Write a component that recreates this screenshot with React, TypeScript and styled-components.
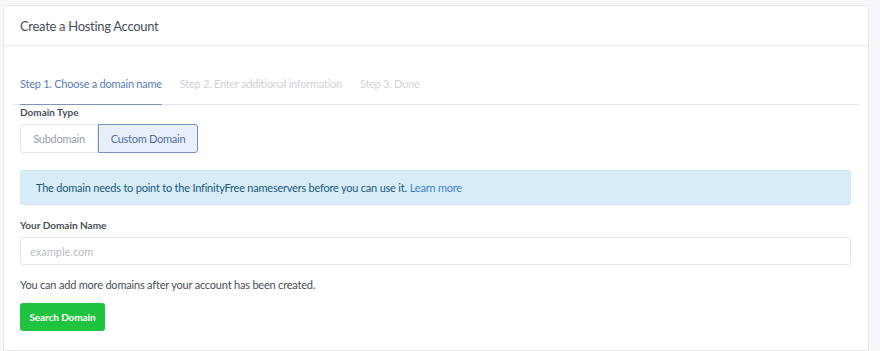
import styled, { createGlobalStyle } from "styled-components";

const GlobalStyle = createGlobalStyle`
  body {
    margin: 0;
    background-color: #f5f7fb;
    font-family: "Lato", "Liberation Sans", sans-serif;
  }
`;

const Page = styled.div`
  padding: 5px 11px 1px 3px;
`;

const Card = styled.div`
  background-color: #fff;
  border: 1px solid #e4e7ec;
  border-radius: 2px;
`;

const CardHeader = styled.div`
  height: 39px;
  display: flex;
  align-items: center;
  padding: 0 16px;
  border-bottom: 1px solid #e9ecef;
  font-size: 13px;
  letter-spacing: -0.3px;
  color: #495057;
`;

const CardBody = styled.div`
  padding: 18px 8px 19px 8px;
`;

const TabList = styled.div`
  display: flex;
  gap: 18px;
  padding-left: 8px;
  border-bottom: 1px solid #e3e6ea;
`;

const Tab = styled.div<{ $active?: boolean }>`
  font-size: 11px;
  letter-spacing: -0.25px;
  line-height: 16px;
  padding: 12px 0;
  margin-bottom: -1px;
  color: ${(p) => (p.$active ? "#5b7db5" : "#d0d3d9")};
  border-bottom: 1px solid ${(p) => (p.$active ? "#7d93bd" : "transparent")};
`;

const Content = styled.div`
  padding: 0 9px 0 8px;
  display: flex;
  flex-direction: column;
  align-items: flex-start;
`;

const Label = styled.div<{ $top: number }>`
  font-size: 10px;
  font-weight: 700;
  color: #495057;
  line-height: 14px;
  margin-top: ${(p) => p.$top}px;
`;

const ButtonGroup = styled.div`
  display: flex;
  margin-top: 5px;
`;

const ToggleButton = styled.div<{ $active?: boolean; $width: number }>`
  width: ${(p) => p.$width}px;
  height: 29px;
  box-sizing: border-box;
  display: flex;
  align-items: center;
  justify-content: center;
  font-size: 11px;
  letter-spacing: -0.25px;
  color: ${(p) => (p.$active ? "#4f6fa6" : "#9aa0ac")};
  background-color: ${(p) => (p.$active ? "#e9effa" : "#fff")};
  border: 1px solid ${(p) => (p.$active ? "#7790c2" : "#e6e8ec")};
  border-radius: ${(p) => (p.$active ? "0 3px 3px 0" : "3px 0 0 3px")};
`;

const Alert = styled.div`
  align-self: stretch;
  margin-top: 17px;
  height: 35px;
  box-sizing: border-box;
  display: flex;
  align-items: center;
  padding: 0 15px;
  background-color: #d6edf9;
  border: 1px solid #cfe7f5;
  border-radius: 3px;
  font-size: 11px;
  letter-spacing: -0.22px;
  color: #24587e;
`;

const Link = styled.a`
  color: #467fcf;
  text-decoration: none;
  margin-left: 3px;
`;

const Input = styled.input`
  align-self: stretch;
  margin-top: 5px;
  height: 28px;
  box-sizing: border-box;
  border: 1px solid #e6e8ec;
  border-radius: 3px;
  padding: 0 9px;
  font-family: inherit;
  font-size: 11px;
  color: #495057;
  outline: none;
  &::placeholder {
    color: #b8bdc5;
  }
`;

const HelpText = styled.div`
  margin-top: 12px;
  font-size: 11px;
  letter-spacing: -0.2px;
  line-height: 15px;
  color: #495057;
`;

const SubmitButton = styled.button`
  margin-top: 11px;
  width: 85px;
  height: 28px;
  border: none;
  border-radius: 3px;
  background-color: #1fc33f;
  color: #fff;
  font-family: inherit;
  font-size: 10px;
  letter-spacing: -0.1px;
  font-weight: 700;
  padding: 0;
`;

export default function App() {
  return (
    <>
      <GlobalStyle />
      <Page>
        <Card>
          <CardHeader>Create a Hosting Account</CardHeader>
          <CardBody>
            <TabList>
              <Tab $active>Step 1. Choose a domain name</Tab>
              <Tab>Step 2. Enter additional information</Tab>
              <Tab>Step 3. Done</Tab>
            </TabList>
            <Content>
              <Label $top={0}>Domain Type</Label>
              <ButtonGroup>
                <ToggleButton $width={78}>Subdomain</ToggleButton>
                <ToggleButton $active $width={100}>
                  Custom Domain
                </ToggleButton>
              </ButtonGroup>
              <Alert>
                The domain needs to point to the InfinityFree nameservers before you can use it.
                <Link href="#">Learn more</Link>
              </Alert>
              <Label $top={13}>Your Domain Name</Label>
              <Input placeholder="example.com" />
              <HelpText>You can add more domains after your account has been created.</HelpText>
              <SubmitButton>Search Domain</SubmitButton>
            </Content>
          </CardBody>
        </Card>
      </Page>
    </>
  );
}
